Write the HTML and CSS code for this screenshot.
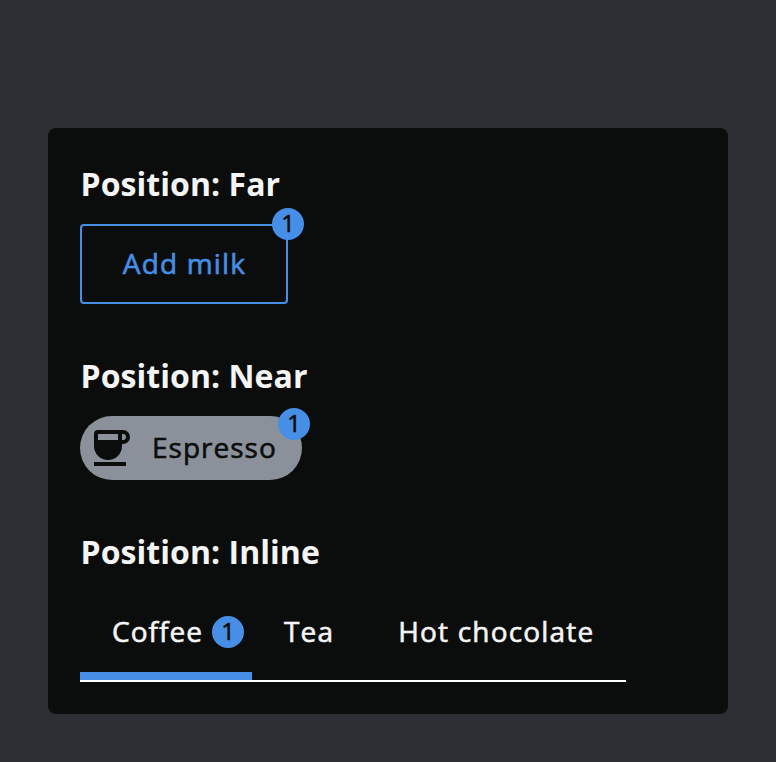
FILE: index.html
```html
<!DOCTYPE html>
<html lang="en">
<head>
<meta charset="utf-8">
<title>Badge positions</title>
<link rel="stylesheet" href="styles.css">
</head>
<body>
<main class="card">
  <section class="far">
    <h2>Position: Far</h2>
    <button class="button">Add milk<span class="badge badge-far">1</span></button>
  </section>
  <section class="near">
    <h2>Position: Near</h2>
    <div class="chip">
      <svg class="cup" viewBox="0 0 36 36" aria-hidden="true"><path fill-rule="evenodd" d="M4 0H29a7 7 0 0 1 0 14H28V16a14 14 0 0 1-28 0V4a4 4 0 0 1 4-4ZM4 4V10H24V4ZM28 4V10H29a3 3 0 0 0 0-6ZM0 32H32V36H0Z"/></svg>
      <span>Espresso</span>
      <span class="badge badge-near">1</span>
    </div>
  </section>
  <section class="inline">
    <h2>Position: Inline</h2>
    <nav class="tabs">
      <a class="tab active">Coffee<span class="badge badge-inline">1</span></a>
      <a class="tab">Tea</a>
      <a class="tab">Hot chocolate</a>
    </nav>
  </section>
</main>
</body>
</html>
```
FILE: styles.css
```css
* { box-sizing: border-box; }
body { margin: 0; padding: 128px 48px 48px; background: #2c2f34; font-family: "Open Sans", sans-serif; color: #f5f5f5; }
.card { height: 586px; padding: 32px; border-radius: 8px; background: #0b0d0c; }
h2 { margin: 0; padding-left: .5px; font-size: 32px; line-height: 48px; font-weight: 700; letter-spacing: .05px; }
.far { height: 192px; }
.near { height: 176px; }
.button, .chip, .tab { font-family: "Open Sans", sans-serif; font-size: 28px; font-weight: 400; letter-spacing: 1.18px; -webkit-text-stroke: .6px currentColor; }
.button { position: relative; display: block; width: 208px; height: 80px; margin-top: 16px; padding: 0 0 2px 1px; border: 2px solid #478fe6; border-radius: 4px; background: none; color: #478fe6; }
.badge { display: flex; align-items: center; justify-content: center; width: 32px; height: 32px; flex: none; border-radius: 50%; background: #478fe6; color: #0b0d0c; font-size: 24px; line-height: 30px; padding-bottom: 2px; letter-spacing: 0; -webkit-text-stroke: .6px #0b0d0c; }
.badge-far { position: absolute; top: -18px; right: -18px; }
.chip { position: relative; display: flex; align-items: center; width: 222px; height: 64px; margin-top: 16px; padding-left: 14px; border-radius: 32px; background: #8b919b; color: #0b0d0c; letter-spacing: 1px; }
.chip > span:not(.badge) { padding-bottom: 2px; }
.cup { width: 36px; height: 36px; margin-right: 22px; fill: #0b0d0c; }
.badge-near { position: absolute; top: -8px; right: -8px; }
.tabs { display: flex; width: 546px; height: 90px; margin-top: 16px; border-bottom: 2px solid #fff; }
.tab { display: flex; flex: none; align-items: center; padding: 0 32px 10px; white-space: nowrap; }
.tab.active { width: 172px; padding: 0 8px 2px 32px; border-bottom: 8px solid #478fe6; letter-spacing: 1.05px; }
.badge-inline { margin: 2px 0 0 auto; }
```
